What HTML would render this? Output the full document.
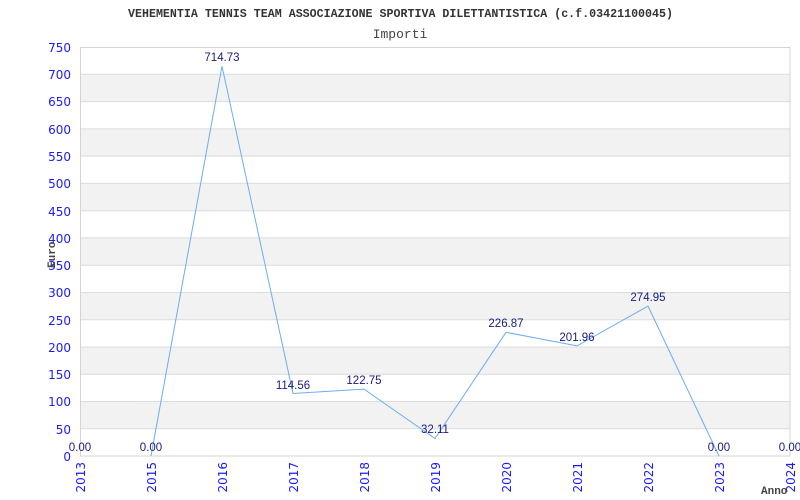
<!DOCTYPE html>
<html><head><style>body{margin:0;background:#fff}</style></head><body>
<svg width="800" height="500" xmlns="http://www.w3.org/2000/svg" style="display:block">
<rect width="800" height="500" fill="#fff"/>
<g fill="#f2f2f2">
<rect x="80" y="74.3" width="710" height="27.3"/>
<rect x="80" y="128.9" width="710" height="27.3"/>
<rect x="80" y="183.4" width="710" height="27.3"/>
<rect x="80" y="237.9" width="710" height="27.3"/>
<rect x="80" y="292.5" width="710" height="27.3"/>
<rect x="80" y="347" width="710" height="27.3"/>
<rect x="80" y="401.5" width="710" height="27.3"/>
</g>
<g stroke="#dcdcdc" stroke-width="1">
<line x1="80" y1="74.3" x2="790" y2="74.3"/><line x1="80" y1="101.6" x2="790" y2="101.6"/>
<line x1="80" y1="128.9" x2="790" y2="128.9"/><line x1="80" y1="156.1" x2="790" y2="156.1"/>
<line x1="80" y1="183.4" x2="790" y2="183.4"/><line x1="80" y1="210.7" x2="790" y2="210.7"/>
<line x1="80" y1="237.9" x2="790" y2="237.9"/><line x1="80" y1="265.2" x2="790" y2="265.2"/>
<line x1="80" y1="292.5" x2="790" y2="292.5"/><line x1="80" y1="319.8" x2="790" y2="319.8"/>
<line x1="80" y1="347" x2="790" y2="347"/><line x1="80" y1="374.3" x2="790" y2="374.3"/>
<line x1="80" y1="401.5" x2="790" y2="401.5"/><line x1="80" y1="428.8" x2="790" y2="428.8"/>
</g>
<rect x="80.5" y="47.5" width="709.5" height="408.5" fill="none" stroke="#d4d4d4"/>
<polyline fill="none" stroke="#6aaef0" stroke-width="1" points="151,456 222,66.2 293,393.5 364,389.1 435,438.5 506,332.3 577,345.9 648,306.1 719,456"/>
<text x="128" y="17" textLength="545" lengthAdjust="spacingAndGlyphs" font-family="Liberation Mono, monospace" font-size="11.5" font-weight="bold" fill="#333">VEHEMENTIA TENNIS TEAM ASSOCIAZIONE SPORTIVA DILETTANTISTICA (c.f.03421100045)</text>
<text x="400" y="38" text-anchor="middle" font-family="Liberation Mono, monospace" font-size="13" fill="#444">Importi</text>
<g font-family="DejaVu Sans, sans-serif" font-size="12" fill="#1a1aff" text-anchor="end">
<text x="71" y="52">750</text><text x="71" y="79">700</text><text x="71" y="106">650</text><text x="71" y="134">600</text><text x="71" y="161">550</text><text x="71" y="188">500</text><text x="71" y="216">450</text><text x="71" y="243">400</text><text x="71" y="270">350</text><text x="71" y="297">300</text><text x="71" y="325">250</text><text x="71" y="352">200</text><text x="71" y="379">150</text><text x="71" y="406">100</text><text x="71" y="434">50</text><text x="71" y="461">0</text>
</g>
<g font-family="DejaVu Sans, sans-serif" font-size="12" fill="#1a1aff" text-anchor="end">
<text transform="translate(85,462) rotate(-90)">2013</text>
<text transform="translate(156,462) rotate(-90)">2015</text>
<text transform="translate(227,462) rotate(-90)">2016</text>
<text transform="translate(298,462) rotate(-90)">2017</text>
<text transform="translate(369,462) rotate(-90)">2018</text>
<text transform="translate(440,462) rotate(-90)">2019</text>
<text transform="translate(511,462) rotate(-90)">2020</text>
<text transform="translate(582,462) rotate(-90)">2021</text>
<text transform="translate(653,462) rotate(-90)">2022</text>
<text transform="translate(724,462) rotate(-90)">2023</text>
<text transform="translate(795,462) rotate(-90)">2024</text>
</g>
<g font-family="Liberation Sans, sans-serif" font-size="11.5" fill="#1a1a80" text-anchor="middle">
<text x="80" y="451">0.00</text><text x="151" y="451">0.00</text><text x="222" y="61">714.73</text>
<text x="293" y="389">114.56</text><text x="364" y="384">122.75</text><text x="435" y="433">32.11</text>
<text x="506" y="327">226.87</text><text x="577" y="341">201.96</text><text x="648" y="301">274.95</text>
<text x="719" y="451">0.00</text><text x="790" y="451">0.00</text>
</g>
<text transform="translate(55,268) rotate(-90)" font-family="Liberation Mono, monospace" font-size="11" font-weight="bold" fill="#444">Euro</text>
<text x="761" y="494" font-family="Liberation Mono, monospace" font-size="11" font-weight="bold" fill="#444">Anno</text>
</svg>
</body></html>
